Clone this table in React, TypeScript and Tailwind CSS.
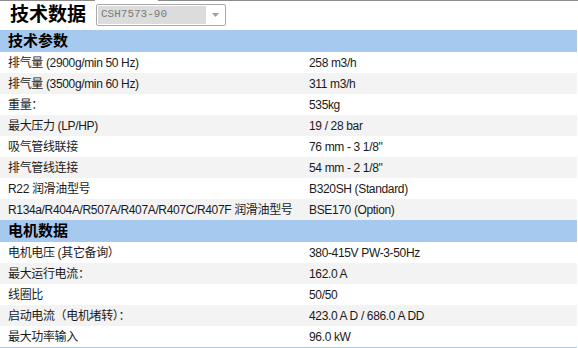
const SECTIONS = [
  {
    title: "技术参数",
    rows: [
      ["排气量 (2900g/min 50 Hz)", "258 m3/h"],
      ["排气量 (3500g/min 60 Hz)", "311 m3/h"],
      ["重量：", "535kg"],
      ["最大压力 (LP/HP)", "19 / 28 bar"],
      ["吸气管线联接", "76 mm - 3 1/8\""],
      ["排气管线连接", "54 mm - 2 1/8\""],
      ["R22 润滑油型号", "B320SH (Standard)"],
      ["R134a/R404A/R507A/R407A/R407C/R407F 润滑油型号", "BSE170 (Option)"],
    ],
  },
  {
    title: "电机数据",
    rows: [
      ["电机电压 (其它备询）", "380-415V PW-3-50Hz"],
      ["最大运行电流：", "162.0 A"],
      ["线圈比", "50/50"],
      ["启动电流（电机堵转）：", "423.0 A D / 686.0 A DD"],
      ["最大功率输入", "96.0 kW"],
    ],
  },
]

export default function App() {
  return (
    <div
      className="w-[578px] h-[348px] bg-white overflow-hidden text-[12px] text-[#1a1a1a]"
      style={{ fontFamily: '"Liberation Sans", "Noto Sans CJK SC", sans-serif' }}
    >
      {/* top edge */}
      <div className="flex h-px">
        <div className="w-[95px] bg-[#8c8c8c]" />
        <div className="w-[63px]" />
        <div className="flex-1 bg-[#8c8c8c]" />
      </div>

      <div className="flex items-center h-[29px] pb-[2px]">
        <h1 className="pl-[10px] w-[96px] text-[19px] font-bold leading-none text-black">技术数据</h1>
        <div className="flex items-center w-[130px] h-[22px] border border-[#a9a9a9] rounded-[2px] p-px">
          <div
            className="flex-1 h-full bg-[#dcdcdc] pl-[3px] flex items-center text-[11px] text-[#7a7a7a]"
            style={{ fontFamily: '"Liberation Mono", monospace' }}
          >
            CSH7573-90
          </div>
          <div className="w-[18px] flex items-center justify-center">
            <svg width="7" height="4" viewBox="0 0 7 4">
              <path d="M0 0h7L3.5 4z" fill="#a0a0a0" />
            </svg>
          </div>
        </div>
      </div>

      <div className="w-[577px]">
        {SECTIONS.map((s) => (
          <div key={s.title}>
            <div className="h-[22px] bg-[#a6c9ef] pl-[8px] flex items-center text-[15px] font-bold text-black">
              {s.title}
            </div>
            {s.rows.map(([label, value], i) => (
              <div
                key={label}
                className={`h-[21px] flex items-center tracking-[-0.35px] ${i % 2 === 1 ? "bg-[#f3f3f3]" : "bg-white"}`}
              >
                <div className="w-[309px] pl-[8px] whitespace-nowrap">{label}</div>
                <div className="whitespace-nowrap">{value}</div>
              </div>
            ))}
          </div>
        ))}
        <div className="h-px bg-[#a6c9ef]" />
      </div>
    </div>
  )
}
